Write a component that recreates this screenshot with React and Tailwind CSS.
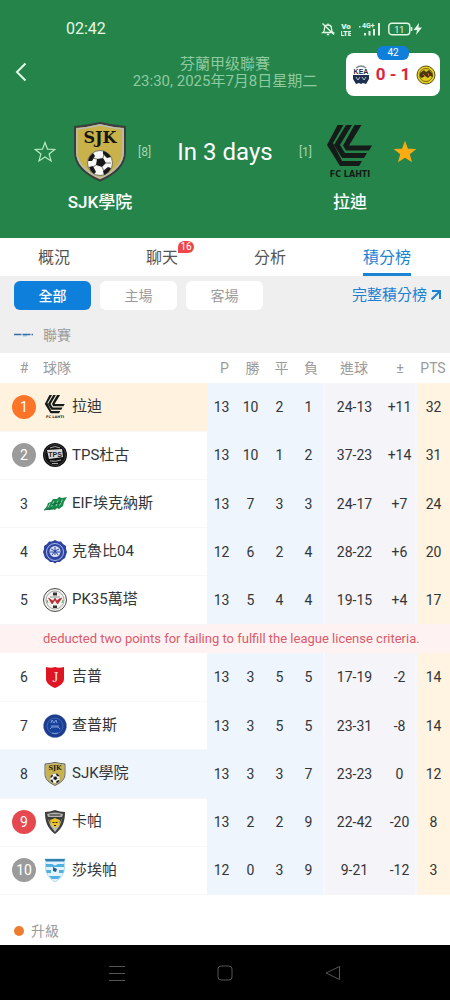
import React, { useState } from "react";

// =========================================================
// DATA
// =========================================================

const TABS = [
  { id: "overview", label: "概況" },
  { id: "chat", label: "聊天", badge: 16 },
  { id: "analysis", label: "分析" },
  { id: "standings", label: "積分榜" },
];

const FILTERS = ["全部", "主場", "客場"];

const ORANGE = "bg-[#fb7427] text-white";
const GRAY = "bg-[#9b9b9b] text-white";
const RED = "bg-[#e5484f] text-white";

// =========================================================
// CLUB LOGOS
// =========================================================

const SjkLogo = ({ className }) => (
  <svg viewBox="0 0 54 60" className={className} aria-hidden="true">
    <path
      d="M2 5Q15 4 27 1Q39 4 52 5V30C52 43 42 52 27 58.500C12 52 2 43 2 30Z"
      fill="#c9b24a"
      stroke="#3b3d40"
      strokeWidth="2"
    />
    <path
      d="M4 7Q15 6 27 3Q39 6 50 7V30C50 42 41 50 27 56C13 50 4 42 4 30Z"
      fill="none"
      stroke="#b9bbb6"
      strokeWidth="1.600"
    />
    <text
      x="27"
      y="21"
      textAnchor="middle"
      fontSize="16"
      fontWeight="700"
      fontFamily="DejaVu Serif, serif"
      fill="#16160f"
    >
      SJK
    </text>
    <circle cx="27" cy="41" r="12.500" fill="#f7f7f5" stroke="#333" strokeWidth="0.600" />
    <path
      d="M24 37l6-1 3 5-4 4-6-2zM15 39q1-5 5-8l2 3-3 5zM30 29q5 1 8 6l-4 1-4-4zM16 45l4-1 3 6-2 2q-4-3-5-7zM30 49l5-4 3 1q-2 5-7 7z"
      fill="#181818"
    />
    <path d="M30 36l1-4M33 41l5 0M29 45l2 4M23 43l-3 2M24 37l-4-1" stroke="#555" strokeWidth="0.800" />
  </svg>
);

const LahtiLogo = ({ className }) => (
  <svg viewBox="0 0 48 54" className={className} aria-hidden="true">
    <g fill="#151b18">
      <path d="M11.500 0h6L7 18l9 18h20l-3 5H14L1 20z" />
      <path d="M20 0h6L14 20l5 8h22l-3 5H16L8 20z" />
      <path d="M28.500 0h7L23 20.500h23l-3 5H20l-3-5z" />
    </g>
    <text
      x="24"
      y="52"
      textAnchor="middle"
      fontSize="8"
      fontWeight="700"
      fontFamily="DejaVu Sans, sans-serif"
      fill="#151b18"
    >
      FC LAHTI
    </text>
  </svg>
);

const TpsLogo = ({ className }) => (
  <svg viewBox="0 0 24 24" className={className} aria-hidden="true">
    <circle cx="12" cy="12" r="12" fill="#111" />
    <circle cx="12" cy="12" r="10.500" fill="none" stroke="#555" strokeWidth="0.600" />
    <path d="M4 7l15-1 1 8-14 2z" fill="#d8d8d8" />
    <text x="12" y="13.500" textAnchor="middle" fontSize="7" fontWeight="700" fontFamily="Liberation Sans, sans-serif" fill="#222">
      TPS
    </text>
    <path d="M7 5q5-3 10 0M7 18q6 1 11-1M9 20.500h6" stroke="#bbb" strokeWidth="0.900" fill="none" />
  </svg>
);

const EifLogo = ({ className }) => (
  <svg viewBox="0 0 24 24" className={className} aria-hidden="true">
    <path
      d="M1 18l3-4 1-3 3-1 2-3 4 0 2-2 3 1 5-1-3 5-1 4-4 3-2-1-2 2-3-1-2 1-3-1z"
      fill="#178a4d"
    />
    <path d="M7 11.500l-2 4M11 9l-2.500 5.500M15 8.500l-2 5.500M19.500 7.500l-3 6" stroke="#cdeBd9" strokeWidth="0.700" />
    <path d="M1 18l6-1 3 0M9 12.500l4-1 5-1" stroke="#0c5c32" strokeWidth="0.900" fill="none" />
  </svg>
);

const KlubiLogo = ({ className }) => (
  <svg viewBox="0 0 24 24" className={className} aria-hidden="true">
    <path
      d="M12 0l3 1.500 3 0 2 2.500 3 2 0 3 1 3-1 3-1 3-3 2-2 2-3 0-2 1.500-2-1.500-3 0-2-2-3-2-1-3-1-3 1-3 0-3 3-2 2-2.500 3 0z"
      fill="#2d43a0"
    />
    <circle cx="12" cy="12" r="8.500" fill="none" stroke="#aebbe6" strokeWidth="1" />
    <circle cx="12" cy="11.500" r="5.500" fill="#d8e0f5" />
    <path d="M8 9l4 2 4-2M9 15l3-4 3 4M12 7v8M7 12h10" stroke="#2d43a0" strokeWidth="1" fill="none" />
  </svg>
);

const PkLogo = ({ className }) => (
  <svg viewBox="0 0 24 24" className={className} aria-hidden="true">
    <circle cx="12" cy="12" r="11.500" fill="#f1f1ee" stroke="#4b4b4b" strokeWidth="1" />
    <circle cx="12" cy="12" r="9" fill="none" stroke="#777" strokeWidth="0.600" />
    <path d="M5.500 10l3.500 6 3-4 2.500 4 4.500-6-3 1-2 2-2-3-2 3z" fill="#c9232d" stroke="#a31a24" strokeWidth="0.500" />
    <path d="M10 4.500h4v3h-4zM10 17.500h4v2.500h-4z" fill="#333" />
    <path d="M7 9h10" stroke="#555" strokeWidth="0.600" />
    <path d="M4 12l1 3M20 12l-1 3" stroke="#3a9a5c" strokeWidth="0.800" />
  </svg>
);

const JippoLogo = ({ className }) => (
  <svg viewBox="0 0 24 24" className={className} aria-hidden="true">
    <path d="M3 2q5 1.500 9 0q4 1.500 9 0v12c0 4-4 7-9 9c-5-2-9-5-9-9z" fill="#df1524" />
    <text x="12.500" y="17" textAnchor="middle" fontSize="15" fontFamily="Liberation Serif, serif" fill="#fbe3e3">
      J
    </text>
  </svg>
);

const TurkuLogo = ({ className }) => (
  <svg viewBox="0 0 24 24" className={className} aria-hidden="true">
    <circle cx="12" cy="12" r="11.500" fill="#1b3c8e" stroke="#7287bd" strokeWidth="0.600" strokeDasharray="2 1" />
    <circle cx="12" cy="12" r="8" fill="#17429c" stroke="#5672b8" strokeWidth="0.700" />
    <path d="M8 9l1-3 2 3 2-3 1 3M8 12h8M9 19q3 1 6 0M7 15l2-2h6l2 2" stroke="#8ba4dc" strokeWidth="0.900" fill="none" />
  </svg>
);

const KapaLogo = ({ className }) => (
  <svg viewBox="0 0 24 24" className={className} aria-hidden="true">
    <path d="M2 2q5 0 10-2q5 2 10 2c0 9-2 16-10 22c-8-6-10-13-10-22z" fill="#3c3d3d" />
    <path d="M4 4q8-3 16 0l-1 3H5z" fill="#b3b4b0" />
    <path d="M4.500 8l3 8 4.500 6 4.500-6 3-8-3 5-4.500 4-4.500-4z" fill="#b9bab8" />
    <path d="M7 10l3-1 2-1 2 1 3 1-1 5-4 3-4-3z" fill="#ebc12c" />
    <path d="M6.500 5h11M9.500 12.500h2M12.500 12.500h2M11 15.500h2" stroke="#222" strokeWidth="1.100" />
  </svg>
);

const SalpaLogo = ({ className }) => (
  <svg viewBox="0 0 24 24" className={className} aria-hidden="true">
    <path d="M2 1h20l-1 3c2 8-1 15-9 20C4 19 1 12 3 4z" fill="#e3f3fb" stroke="#8fcbe8" strokeWidth="0.700" />
    <path d="M2 1h20l-1 2.500H3z" fill="#2f7fb0" />
    <path d="M3 6h6l3 1.500 3-1.500h6v3H3zM3 12h5v3H4zM16 12h5l-1 3h-4zM6 18h12l-3 3H9z" fill="#4fb1e2" />
    <path d="M10 9l4 2-1 3-3-1z" fill="#1c5f96" />
  </svg>
);

const KeaLogo = ({ className }) => (
  <svg viewBox="0 0 18 20" className={className} aria-hidden="true">
    <path d="M4 3q5-4 10 0" stroke="#7d8896" strokeWidth="1.500" fill="none" />
    <text x="9" y="9" textAnchor="middle" fontSize="7" fontWeight="700" fontFamily="Liberation Sans, sans-serif" fill="#1b2a44">
      KEA
    </text>
    <path d="M1 10h16l0 4-3 5-3-1-2 1-2-1-3 1-3-5z" fill="#1d2f4e" />
    <path d="M4 12l2 3 2-3M10 12l2 3 2-3" stroke="#b9c3d0" strokeWidth="1" fill="none" />
  </svg>
);

const BodoLogo = ({ className }) => (
  <svg viewBox="0 0 20 20" className={className} aria-hidden="true">
    <circle cx="10" cy="10" r="9" fill="#e6cf1c" stroke="#57511c" strokeWidth="1" />
    <circle cx="10" cy="10" r="6.500" fill="none" stroke="#57511c" strokeWidth="0.800" />
    <path d="M4 8l4-3 2 2 3-2 3 3 1 4-3-1-2 2-3-2-3 2-2-1z" fill="#4a3a12" />
    <path d="M7 9l2 2M12 8l1 3" stroke="#d9572c" strokeWidth="1" />
  </svg>
);

const STANDINGS = [
  { rank: 1, badge: ORANGE, team: "拉迪", Logo: LahtiLogo, bg: "bg-[#fff3df]", p: 13, w: 10, d: 2, l: 1, goals: "24-13", diff: "+11", pts: 32 },
  { rank: 2, badge: GRAY, team: "TPS杜古", Logo: TpsLogo, p: 13, w: 10, d: 1, l: 2, goals: "37-23", diff: "+14", pts: 31 },
  { rank: 3, team: "EIF埃克納斯", Logo: EifLogo, p: 13, w: 7, d: 3, l: 3, goals: "24-17", diff: "+7", pts: 24 },
  { rank: 4, team: "克魯比04", Logo: KlubiLogo, p: 12, w: 6, d: 2, l: 4, goals: "28-22", diff: "+6", pts: 20 },
  {
    rank: 5,
    team: "PK35萬塔",
    Logo: PkLogo,
    p: 13,
    w: 5,
    d: 4,
    l: 4,
    goals: "19-15",
    diff: "+4",
    pts: 17,
    note: "deducted two points for failing to fulfill the league license criteria.",
  },
  { rank: 6, team: "吉普", Logo: JippoLogo, p: 13, w: 3, d: 5, l: 5, goals: "17-19", diff: "-2", pts: 14 },
  { rank: 7, team: "查普斯", Logo: TurkuLogo, p: 13, w: 3, d: 5, l: 5, goals: "23-31", diff: "-8", pts: 14 },
  { rank: 8, team: "SJK學院", Logo: SjkLogo, bg: "bg-[#eef5fc]", p: 13, w: 3, d: 3, l: 7, goals: "23-23", diff: "0", pts: 12 },
  { rank: 9, badge: RED, team: "卡帕", Logo: KapaLogo, p: 13, w: 2, d: 2, l: 9, goals: "22-42", diff: "-20", pts: 8 },
  { rank: 10, badge: GRAY, team: "莎埃帕", Logo: SalpaLogo, p: 12, w: 0, d: 3, l: 9, goals: "9-21", diff: "-12", pts: 3 },
];

// =========================================================
// STATUS BAR
// =========================================================

const StatusBar = () => (
  <div className="flex h-11 items-center justify-between pt-[14px] pr-7 pl-[66px] text-[#e4f8e6]">
    <span className="text-base">02:42</span>

    <div className="flex items-center">
      <svg viewBox="0 0 14 14" className="mr-1.5 h-3.5 w-3.5" fill="none" stroke="currentColor" strokeWidth="1.300">
        <path d="M2 10.500c1.500-1 1.500-2 1.500-4C3.500 4.500 5 3 7 3s3.500 1.500 3.500 3.500c0 2 0 3 1.500 4zM7 1.500v1.500M5.800 12.500h2.400M1.500 1.500l11.500 11" />
      </svg>
      <svg viewBox="0 0 10 14" className="mr-2 h-3.5 w-2.5" fill="currentColor" fontFamily="Roboto, sans-serif" fontWeight="900">
        <text x="5" y="6.500" textAnchor="middle" fontSize="8">
          Vo
        </text>
        <text x="5" y="13.500" textAnchor="middle" fontSize="7">
          LTE
        </text>
      </svg>
      <svg viewBox="0 0 22 14" className="mr-[7px] h-3.5 w-[22px]" fill="currentColor" fontFamily="Roboto, sans-serif" fontWeight="700">
        <text x="3" y="6" fontSize="7">
          4G+
        </text>
        <path d="M5 11h2v2.500H5zM9.500 9h2v4.500h-2zM14 7h2v6.500h-2zM19 1h2v12.500h-2zM0 4h1.500v1.500H0z" />
      </svg>
      <svg viewBox="0 0 34 14" className="h-3.5 w-[34px]" fill="none" stroke="currentColor">
        <rect x="0.800" y="1.200" width="21" height="11.500" rx="3" strokeWidth="1.400" />
        <path d="M23.500 5v4" strokeWidth="1.600" />
        <text x="11.300" y="10.500" textAnchor="middle" fontSize="9" fontFamily="Roboto, sans-serif" fill="currentColor" stroke="none">
          11
        </text>
        <path d="M31 1l-5.500 7h3.500l-1 5 6-7.500h-3.500z" fill="currentColor" stroke="none" />
      </svg>
    </div>
  </div>
);

// =========================================================
// MATCH HEADER
// =========================================================

const STAR_PATH =
  "M11 1.500l2.500 6.700 7.200 0.300-5.600 4.500 1.900 6.900-6-4-6 4 1.900-6.900-5.600-4.500 7.200-0.300z";

const MatchHeader = () => {
  const [favorites, setFavorites] = useState({ home: false, away: true });

  const toggleFavorite = (side) => {
    setFavorites({ ...favorites, [side]: !favorites[side] });
  };

  const renderStar = (side) => (
    <button type="button" aria-label="收藏" onClick={() => toggleFavorite(side)}>
      <svg viewBox="0 0 22 22" className="h-[22px] w-[22px]">
        <path
          d={STAR_PATH}
          fill={favorites[side] ? "#fcac12" : "none"}
          stroke={favorites[side] ? "#fcac12" : "#b9ecc0"}
          strokeWidth="1.200"
        />
      </svg>
    </button>
  );

  return (
    <header className="bg-[#24844a] pb-6 text-white">
      <StatusBar />

      <div className="grid grid-cols-[104px_1fr_104px] pt-[9px]">
        <button type="button" aria-label="返回" className="ml-[14px] flex h-[38px] w-6 items-center">
          <svg viewBox="0 0 14 20" className="h-5 w-3.5" fill="none" stroke="#e4f8e6" strokeWidth="2">
            <path d="M11.500 1.500L3 10l8.500 8.500" />
          </svg>
        </button>

        <div className="pt-[3px] text-center text-[15px] leading-[17px] whitespace-nowrap text-[#8fcaa0]">
          <h1>芬蘭甲级聯賽</h1>
          <p>23:30, 2025年7月8日星期二</p>
        </div>

        <a
          href="#live"
          className="relative mr-2.5 flex h-[43px] items-center justify-between rounded-lg bg-white pr-1 pl-1.5"
        >
          <span className="absolute -top-[7px] left-1/2 h-3.5 w-8 -translate-x-1/2 rounded-md bg-[#0f7fdc] text-center text-[10px] leading-3.5">
            42
          </span>
          <KeaLogo className="h-5 w-[18px]" />
          <span className="text-[17px] font-bold text-[#dc2440]">0 - 1</span>
          <BodoLogo className="h-5 w-5" />
        </a>
      </div>

      <div className="mt-[26px] grid grid-cols-[28px_76px_1fr_76px_28px] items-center gap-y-2 px-[34px]">
        {renderStar("home")}
        <SjkLogo className="h-[60px] w-[54px] justify-self-center" />
        <div className="flex items-center justify-between text-[#a5d6b1]">
          <span className="text-xs">[8]</span>
          <span className="text-2xl text-white">In 3 days</span>
          <span className="text-xs">[1]</span>
        </div>
        <LahtiLogo className="h-[54px] w-12 justify-self-center" />
        <div className="flex justify-end">{renderStar("away")}</div>

        <h2 className="col-start-2 text-center text-[17px] leading-6 font-medium whitespace-nowrap">SJK學院</h2>
        <h2 className="col-start-4 text-center text-[17px] leading-6 font-medium whitespace-nowrap">拉迪</h2>
      </div>
    </header>
  );
};

// =========================================================
// STANDINGS TABLE
// =========================================================

const StandingsTable = () => (
  <table className="h-[542px] w-full table-fixed border-collapse text-center text-sm text-[#333538]">
    <colgroup>
      <col className="w-[43px]" />
      <col />
      <col className="w-[29px]" />
      <col className="w-[29px]" />
      <col className="w-[29px]" />
      <col className="w-[30px]" />
      <col className="w-[60px]" />
      <col className="w-[32px]" />
      <col className="w-[34px]" />
    </colgroup>

    <thead>
      <tr className="h-[30px] text-[#9b9b9b] [&>th]:p-0 [&>th]:font-normal">
        <th className="text-left">
          <span className="ml-3 block w-6 text-center">#</span>
        </th>
        <th className="text-left">球隊</th>
        <th>
          <span className="pl-1.5">P</span>
        </th>
        <th>
          <span className="pl-1">勝</span>
        </th>
        <th>
          <span className="pl-1">平</span>
        </th>
        <th>
          <span className="pl-1">負</span>
        </th>
        <th>進球</th>
        <th>±</th>
        <th>PTS</th>
      </tr>
    </thead>

    <tbody>
      {STANDINGS.map(({ rank, badge, team, Logo, bg, p, w, d, l, goals, diff, pts, note }) => (
        <React.Fragment key={rank}>
          <tr className="h-12 [&>td]:p-0">
            <td className={`border-b border-[#f7f7f8] ${bg || ""}`}>
              <span className={`ml-3 block h-6 w-6 rounded-full leading-6 ${badge || ""}`}>{rank}</span>
            </td>
            <td className={`border-b border-[#f7f7f8] ${bg || ""}`}>
              <div className="flex items-center gap-[5px] text-[15px] whitespace-nowrap">
                <Logo className="h-6 w-6" />
                {team}
              </div>
            </td>
            <td className="bg-[#eef5fd]">{p}</td>
            <td className="bg-[#eef5fd]">{w}</td>
            <td className="bg-[#eef5fd]">{d}</td>
            <td className="border-r-2 border-[#f7f9fd] bg-[#eef5fd]">{l}</td>
            <td className="bg-[#f4f4f9]">{goals}</td>
            <td className="border-r-2 border-[#f7f7fb] bg-[#f4f4f9]">{diff}</td>
            <td className="bg-[#fff3e1]">{pts}</td>
          </tr>

          {note && (
            <tr className="h-[29px]">
              <td
                colSpan={9}
                className="bg-[#fff2f2] p-0 pl-[43px] text-left text-[13px] whitespace-nowrap text-[#d85a6b]"
              >
                {note}
              </td>
            </tr>
          )}
        </React.Fragment>
      ))}
    </tbody>
  </table>
);

// =========================================================
// PAGE
// =========================================================

const App = () => {
  const [activeTab, setActiveTab] = useState("standings");
  const [filter, setFilter] = useState("全部");

  return (
    <div className="flex min-h-screen flex-col bg-white font-[Roboto,'Noto_Sans_CJK_TC',sans-serif]">
      <MatchHeader />

      {/* TABS */}

      <nav className="flex h-[38px] text-base text-[#555]">
        {TABS.map((tab) => (
          <button
            key={tab.id}
            type="button"
            onClick={() => setActiveTab(tab.id)}
            className={`flex justify-center ${tab.id === "standings" ? "flex-1" : "w-[24%]"}`}
          >
            <span
              className={`relative h-full border-b-[3px] leading-10 ${
                activeTab === tab.id ? "border-[#1c82d2] text-[#1c82d2]" : "border-transparent"
              }`}
            >
              {tab.label}
              {tab.badge && (
                <span className="absolute top-[3px] left-full h-3 w-4 rounded-md rounded-bl-none bg-[#ee4549] text-center text-[10px] leading-3 text-white">
                  {tab.badge}
                </span>
              )}
            </span>
          </button>
        ))}
      </nav>

      {/* FILTERS */}

      <section className="bg-[#efefef] pt-[5px] pr-2 pl-[14px] text-sm text-[#9b9b9b]">
        <div className="flex items-center justify-between">
          <div className="flex gap-[9px]">
            {FILTERS.map((item) => (
              <button
                key={item}
                type="button"
                onClick={() => setFilter(item)}
                className={`h-[29px] w-[77px] rounded-md ${
                  filter === item ? "bg-[#0f7fdc] font-medium text-white" : "bg-white"
                }`}
              >
                {item}
              </button>
            ))}
          </div>

          <a href="#full" className="flex items-center gap-[3px] text-[15px] text-[#1c82d2]">
            完整積分榜
            <svg viewBox="0 0 12 12" className="h-3 w-3" fill="none" stroke="currentColor" strokeWidth="2">
              <path d="M2 2h8v8M10 2L1.500 10.500" />
            </svg>
          </a>
        </div>

        <div className="flex h-[43px] items-center gap-2.5 pt-[7px]">
          <svg viewBox="0 0 19 4" className="h-1 w-[19px]">
            <path d="M0 1.500h19" stroke="#3a6ea3" strokeWidth="1.400" strokeDasharray="7 0.500 1 0.500" />
            <path d="M9 2.800h4" stroke="#6fb0dd" strokeWidth="1" />
          </svg>
          聯賽
        </div>
      </section>

      <StandingsTable />

      {/* LEGEND */}

      <div className="flex flex-1 items-start gap-[7px] px-[14px] pt-[26px] text-sm leading-5 text-[#9b9b9b]">
        <span className="mt-[5px] h-2.5 w-2.5 rounded-full bg-[#ee7c30]" />
        升級
      </div>

      {/* SYSTEM NAVIGATION */}

      <div className="flex h-[55px] items-center justify-center gap-[92px] bg-black text-[#555]">
        <button type="button" aria-label="選單">
          <svg viewBox="0 0 16 16" className="h-4 w-4" fill="none" stroke="currentColor">
            <path d="M0 1.500h16M0 8.500h16M0 15.500h16" />
          </svg>
        </button>
        <button type="button" aria-label="主畫面">
          <svg viewBox="0 0 16 16" className="h-4 w-4" fill="none" stroke="currentColor">
            <rect x="1" y="1" width="14" height="14" rx="3" />
          </svg>
        </button>
        <button type="button" aria-label="返回">
          <svg viewBox="0 0 16 16" className="h-4 w-4" fill="none" stroke="currentColor" strokeLinejoin="round">
            <path d="M14.500 1.500v13L1 8z" />
          </svg>
        </button>
      </div>
    </div>
  );
};

export default App;
